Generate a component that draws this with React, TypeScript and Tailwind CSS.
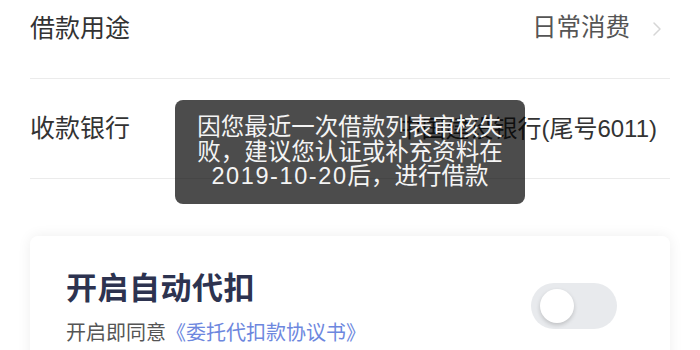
import React from "react";

export default function App() {
  return (
    <div
      className="relative w-[700px] h-[350px] overflow-hidden bg-white"
      style={{ fontFamily: '"Liberation Sans", "Noto Sans CJK SC", "Noto Sans", sans-serif' }}
    >
      <div className="-mt-[21px] px-[30px]">
        <div className="h-[100px] flex items-center justify-between border-b border-[#ebebeb]">
          <span className="text-[25px] leading-none text-[#333]">借款用途</span>
          <div className="flex items-center">
            <span className="text-[24.5px] leading-none text-[#555]">日常消费</span>
            <svg className="ml-[22px] mr-[8px]" width="10" height="16" viewBox="0 0 10 16" fill="none">
              <path d="M2 2 L8 8 L2 14" stroke="#d6d6d6" strokeWidth="1.5" strokeLinecap="round" strokeLinejoin="round" />
            </svg>
          </div>
        </div>
        <div className="h-[100px] flex items-center justify-between border-b border-[#ebebeb]">
          <span className="text-[25px] leading-none text-[#333]">收款银行</span>
          <span className="text-[24px] leading-none text-[#333] mr-[13px]">中国建设银行(尾号6011)</span>
        </div>
      </div>

      <div className="mx-[30px] mt-[57px] rounded-[8px] bg-white shadow-[0_0_14px_rgba(0,0,0,0.07)] pl-[36px] pr-[53px] pt-[33px] pb-[20px] flex items-start justify-between">
        <div className="flex flex-col">
          <span className="text-[31px] leading-[40px] font-bold text-[#2d3350] tracking-[0.5px]">开启自动代扣</span>
          <span className="mt-[10px] text-[20px] leading-[28px] text-[#555]">
            开启即同意<span className="text-[#6d87de]">《委托代扣款协议书》</span>
          </span>
        </div>
        <div className="mt-[14px] w-[86px] h-[46px] rounded-full bg-[#e8eaed] flex items-center pl-[9px]">
          <div className="w-[34px] h-[34px] rounded-full bg-white shadow-[0_2px_4px_rgba(0,0,0,0.18)]" />
        </div>
      </div>

      <div className="absolute left-[175px] top-[100px] w-[350px] h-[104px] rounded-[8px] bg-[rgba(0,0,0,0.7)] flex items-center justify-center">
        <p className="text-center text-[23.5px] leading-[24.5px] text-[#f4f4f4]">
          因您最近一次借款列表审核失
          <br />
          败，建议您认证或补充资料在
          <br />
          <span className="tracking-[1.6px]">2019-10-20</span>后，进行借款
        </p>
      </div>
    </div>
  );
}
